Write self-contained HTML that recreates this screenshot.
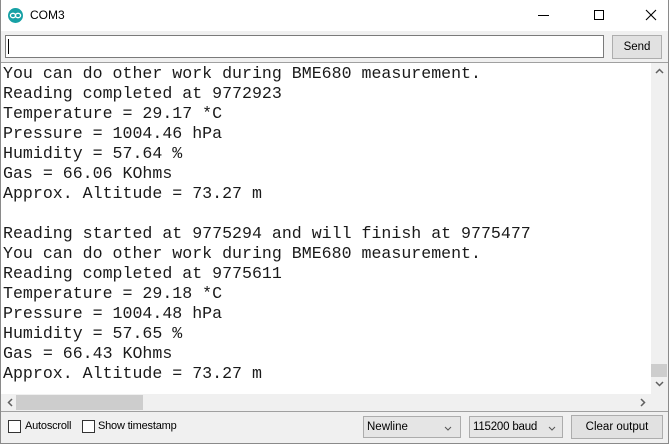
<!DOCTYPE html>
<html><head><meta charset="utf-8"><style>
*{margin:0;padding:0;box-sizing:border-box}
body{width:669px;height:444px;overflow:hidden;background:#f0f0f0;font-family:"Liberation Sans",sans-serif;position:relative;font-size:11.5px;color:#000}
.a{position:absolute}
#win{left:0;top:0;width:669px;height:444px;border:1px solid #8a8a8a;border-top:none}
#title{left:0;top:0;width:669px;height:31px;background:#fff}
#out{left:1px;top:63px;width:650px;height:331px;background:#fff;font-family:"Liberation Mono",monospace;font-size:16.6px;line-height:20px;padding:1px 0 0 2px;white-space:pre;color:#1a1a1a}
.btn{background:#e1e1e1;border:1px solid #adadad;text-align:center}
.sel{background:#e5e5e5;border:1px solid #acacac;padding-left:3px;line-height:20px}
.cb{width:13px;height:13px;border:1px solid #333;background:#fff}
</style></head><body>
<div class="a" id="title"></div>
<svg class="a" style="left:8px;top:8px" width="15" height="15" viewBox="0 0 15 15"><circle cx="7.5" cy="7.5" r="7.5" fill="#17a1a5"/><ellipse cx="5" cy="7.5" rx="2.6" ry="2.2" fill="none" stroke="#fff" stroke-width="1.3"/><ellipse cx="10" cy="7.5" rx="2.6" ry="2.2" fill="none" stroke="#fff" stroke-width="1.3"/></svg>
<div class="a" style="left:30px;top:8px;font-size:12px">COM3</div>
<div class="a" style="left:538px;top:15px;width:11px;height:1px;background:#000"></div>
<div class="a" style="left:594px;top:10px;width:10px;height:10px;border:1px solid #000"></div>
<svg class="a" style="left:645px;top:9px" width="12" height="12"><path d="M1 1L11 11M11 1L1 11" stroke="#000" stroke-width="1.1"/></svg>
<div class="a" style="left:5px;top:35px;width:599px;height:23px;background:#fff;border:1px solid #7a7a7a"></div>
<div class="a" style="left:8px;top:39px;width:1px;height:15px;background:#000"></div>
<div class="a btn" style="left:612px;top:35px;width:50px;height:24px;line-height:22px">Send</div>
<div class="a" style="left:0;top:62px;width:669px;height:1px;background:#a0a0a0"></div>
<div class="a" id="out">You can do other work during BME680 measurement.
Reading completed at 9772923
Temperature = 29.17 *C
Pressure = 1004.46 hPa
Humidity = 57.64 %
Gas = 66.06 KOhms
Approx. Altitude = 73.27 m

Reading started at 9775294 and will finish at 9775477
You can do other work during BME680 measurement.
Reading completed at 9775611
Temperature = 29.18 *C
Pressure = 1004.48 hPa
Humidity = 57.65 %
Gas = 66.43 KOhms
Approx. Altitude = 73.27 m</div>
<div class="a" style="left:651px;top:63px;width:17px;height:331px;background:#f0f0f0"></div>
<svg class="a" style="left:655px;top:68px" width="9" height="6"><path d="M1 5L4.5 1.5L8 5" stroke="#606060" stroke-width="1.5" fill="none"/></svg>
<div class="a" style="left:651px;top:364px;width:16px;height:13px;background:#cdcdcd"></div>
<svg class="a" style="left:655px;top:381px" width="9" height="6"><path d="M1 1L4.5 4.5L8 1" stroke="#606060" stroke-width="1.5" fill="none"/></svg>
<div class="a" style="left:1px;top:394px;width:667px;height:17px;background:#f0f0f0"></div>
<svg class="a" style="left:7px;top:398px" width="6" height="9"><path d="M5 1L1.5 4.5L5 8" stroke="#606060" stroke-width="1.5" fill="none"/></svg>
<div class="a" style="left:16px;top:395px;width:127px;height:15px;background:#cdcdcd"></div>
<svg class="a" style="left:640px;top:398px" width="6" height="9"><path d="M1 1L4.5 4.5L1 8" stroke="#606060" stroke-width="1.5" fill="none"/></svg>
<div class="a" style="left:0;top:411px;width:669px;height:1px;background:#a0a0a0"></div>
<div class="a cb" style="left:8px;top:420px"></div>
<div class="a" style="left:25px;top:420px;font-size:11px;letter-spacing:-0.2px">Autoscroll</div>
<div class="a cb" style="left:82px;top:420px"></div>
<div class="a" style="left:98px;top:420px;font-size:11px;letter-spacing:-0.2px">Show timestamp</div>
<div class="a sel" style="left:363px;top:416px;width:98px;height:22px">Newline<svg style="position:absolute;right:8px;top:9px" width="8" height="5"><path d="M1 1L4 4L7 1" stroke="#555" fill="none"/></svg></div>
<div class="a sel" style="left:469px;top:416px;width:94px;height:22px;letter-spacing:-0.2px">115200 baud<svg style="position:absolute;right:6px;top:9px" width="8" height="5"><path d="M1 1L4 4L7 1" stroke="#555" fill="none"/></svg></div>
<div class="a btn" style="left:571px;top:415px;width:92px;height:24px;line-height:22px">Clear output</div>
<div class="a" id="win"></div>
</body></html>
